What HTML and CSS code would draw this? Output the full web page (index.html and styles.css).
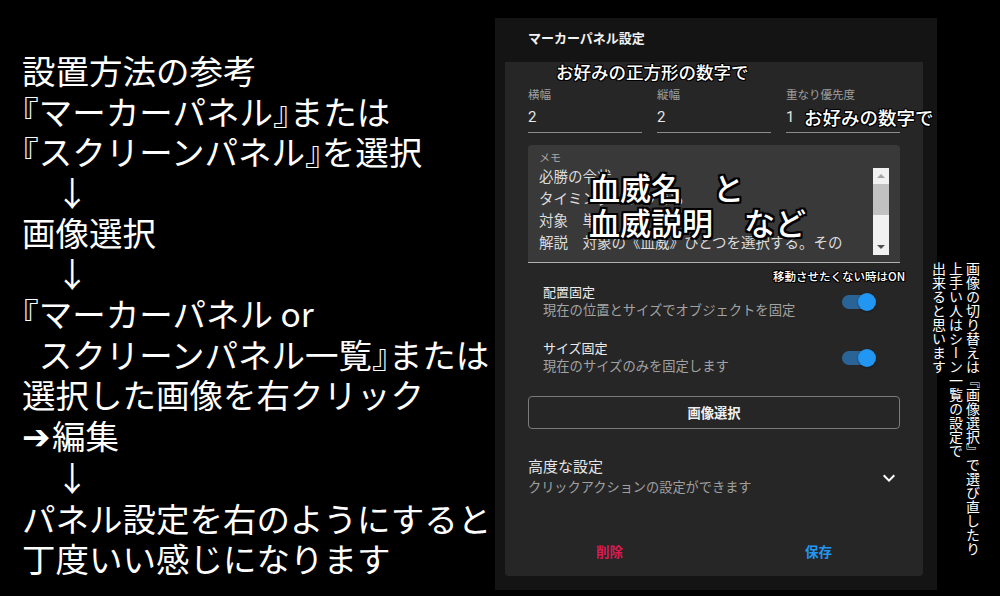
FILE: index.html
```html
<!DOCTYPE html>
<html lang="ja">
<head>
<meta charset="utf-8">
<title>マーカーパネル設定</title>
<link rel="stylesheet" href="styles.css">
</head>
<body>
<div class="page">
  <div class="guide">
    <div class="line">設置方法の参考</div>
    <div class="line"><span class="h">『</span>マーカーパネル<span class="h">』</span>または</div>
    <div class="line"><span class="h">『</span>スクリーンパネル<span class="h">』</span>を選択</div>
    <div class="line">　↓</div>
    <div class="line">画像選択</div>
    <div class="line">　↓</div>
    <div class="line"><span class="h">『</span>マーカーパネル or</div>
    <div class="line indent">スクリーンパネル一覧<span class="h">』</span>または</div>
    <div class="line">選択した画像を右クリック</div>
    <div class="line"><span class="arrow">➔</span>編集</div>
    <div class="line">　↓</div>
    <div class="line">パネル設定を右のようにすると</div>
    <div class="line">丁度いい感じになります</div>
  </div>

  <div class="panel">
    <div class="panel-title">マーカーパネル設定</div>
    <div class="card">
      <div class="fields">
        <div class="field"><div class="field-label">横幅</div><div class="field-value">2</div></div>
        <div class="field"><div class="field-label">縦幅</div><div class="field-value">2</div></div>
        <div class="field"><div class="field-label">重なり優先度</div><div class="field-value">1</div></div>
      </div>
      <div class="memo">
        <div class="memo-label">メモ</div>
        <div class="memo-body">
          <div class="memo-text">
            <div>必勝の令状</div>
            <div>タイミング　いつでも</div>
            <div>対象　単体</div>
            <div>解説　対象の《血威》ひとつを選択する。その</div>
          </div>
          <div class="scrollbar">
            <span class="sb-up"></span>
            <span class="sb-thumb"></span>
            <span class="sb-down"></span>
          </div>
        </div>
      </div>
      <div class="switches">
        <div class="switch-row">
          <div class="switch-text">
            <div class="switch-title">配置固定</div>
            <div class="switch-sub">現在の位置とサイズでオブジェクトを固定</div>
          </div>
          <span class="toggle"><span class="thumb"></span></span>
        </div>
        <div class="switch-row">
          <div class="switch-text">
            <div class="switch-title">サイズ固定</div>
            <div class="switch-sub">現在のサイズのみを固定します</div>
          </div>
          <span class="toggle"><span class="thumb"></span></span>
        </div>
      </div>
      <div class="select-btn">画像選択</div>
      <div class="advanced">
        <div class="adv-text">
          <div class="adv-title">高度な設定</div>
          <div class="adv-sub">クリックアクションの設定ができます</div>
        </div>
        <svg class="chev" width="24" height="24" viewBox="0 0 24 24"><path d="M16.59 8.59L12 13.17 7.41 8.59 6 10l6 6 6-6z" fill="#ffffff"/></svg>
      </div>
      <div class="footer">
        <span class="btn-del">削除</span>
        <span class="btn-save">保存</span>
      </div>
    </div>
  </div>

  <div class="note note-square">お好みの正方形の数字で</div>
  <div class="note note-number">お好みの数字で</div>
  <div class="note note-big">血威名　と<br>血威説明　など</div>
  <div class="note note-on">移動させたくない時はON</div>
  <div class="vnote">画像の切り替えは『画像選択』で選び直したり<br>上手い人はシーン一覧の設定で<br>出来ると思います</div>
</div>
</body>
</html>
```

FILE: styles.css
```css
html, body {
  margin: 0;
  padding: 0;
  background: #000;
}
.page {
  position: relative;
  width: 1000px;
  height: 596px;
  overflow: hidden;
  display: flex;
  align-items: flex-start;
  font-family: Roboto, "Noto Sans CJK JP", sans-serif;
}

/* left guide text */
.guide {
  width: 473px;
  padding: 50px 0 0 22px;
  font-family: "Noto Sans CJK JP", sans-serif;
  font-size: 33.5px;
  line-height: 40.5px;
  color: #fff;
  white-space: nowrap;
}
.guide .h { font-feature-settings: "halt" 1; }
.guide .indent { padding-left: 0.5em; }
.guide .arrow {
  display: inline-block;
  width: 30px;
  font-family: "DejaVu Sans", sans-serif;
  font-size: 34px;
  font-weight: 700;
}

/* dialog */
.panel {
  margin-top: 18px;
  width: 442px;
  height: 572px;
  background: #141414;
  display: flex;
  flex-direction: column;
}
.panel-title {
  height: 44px;
  box-sizing: border-box;
  padding: 12px 0 0 33px;
  font-size: 13px;
  line-height: 17px;
  font-weight: 700;
  color: #f2f2f2;
}
.card {
  margin: 0 14px 0 10px;
  height: 514px;
  box-sizing: border-box;
  padding: 26px 23px 0 23px;
  background: #262626;
  border-radius: 0 0 4px 4px;
  display: flex;
  flex-direction: column;
}
.fields {
  display: grid;
  grid-template-columns: repeat(3, 1fr);
  column-gap: 15px;
}
.field {
  border-bottom: 1px solid #8c8c8c;
  padding-bottom: 4px;
}
.field-label {
  font-size: 11.5px;
  line-height: 14px;
  color: #a0a0a0;
}
.field-value {
  margin-top: 4px;
  font-size: 15px;
  line-height: 22px;
  color: #e6e6e6;
}
.memo {
  margin-top: 12px;
  background: #393939;
  border-radius: 4px 4px 0 0;
  border-bottom: 1px solid #b0b0b0;
  padding: 7px 11px 7px 11px;
}
.memo-label {
  font-size: 11px;
  line-height: 14px;
  color: #a8a8a8;
}
.memo-body {
  margin-top: 1px;
  display: flex;
  align-items: flex-start;
}
.memo-text {
  flex: 1;
  font-size: 14.5px;
  line-height: 22px;
  color: #dcdcdc;
  white-space: nowrap;
  overflow: hidden;
}
.scrollbar {
  position: relative;
  width: 16px;
  height: 87px;
  margin-top: 1px;
  background: #f1f1f1;
  display: flex;
  flex-direction: column;
  align-items: center;
}
.sb-up {
  margin-top: 6px;
  width: 0;
  height: 0;
  border-left: 4px solid transparent;
  border-right: 4px solid transparent;
  border-bottom: 4px solid #a3a3a3;
}
.sb-thumb {
  margin-top: 6px;
  width: 16px;
  height: 31px;
  background: #c1c1c1;
}
.sb-down {
  margin-top: auto;
  margin-bottom: 6px;
  width: 0;
  height: 0;
  border-left: 4px solid transparent;
  border-right: 4px solid transparent;
  border-top: 4px solid #505050;
}
.switches {
  padding-top: 11px;
}
.switch-row {
  display: flex;
  align-items: center;
  padding: 10px 24px 10px 15px;
}
.switch-text { flex: 1; }
.switch-title {
  font-size: 13px;
  line-height: 18px;
  color: #ececec;
}
.switch-sub {
  font-size: 13.3px;
  line-height: 18px;
  color: #a3a3a3;
}
.toggle {
  position: relative;
  width: 34px;
  height: 14px;
}
.toggle::before {
  content: "";
  position: absolute;
  left: 0;
  top: 0;
  width: 28px;
  height: 14px;
  border-radius: 7px;
  background: #2a6496;
}
.thumb {
  position: absolute;
  left: 16px;
  top: -2px;
  width: 18px;
  height: 18px;
  border-radius: 50%;
  background: #2196f3;
  box-shadow: 0 1px 2px rgba(0,0,0,0.4);
}
.select-btn {
  margin-top: 10px;
  height: 33px;
  box-sizing: border-box;
  border: 1px solid #7a7a7a;
  border-radius: 4px;
  display: flex;
  align-items: center;
  justify-content: center;
  font-size: 13.3px;
  font-weight: 700;
  color: #f0f0f0;
}
.advanced {
  margin-top: 28px;
  display: flex;
  align-items: center;
}
.adv-text { flex: 1; }
.adv-title {
  font-size: 15px;
  line-height: 20px;
  color: #e6e6e6;
}
.adv-sub {
  margin-top: 1px;
  font-size: 13.2px;
  line-height: 20px;
  color: #a0a0a0;
}
.chev { margin-right: -1px; }
.footer {
  margin: auto -23px 0 -23px;
  height: 50px;
  display: grid;
  grid-template-columns: 1fr 1fr;
  align-items: center;
  justify-items: center;
  font-size: 13.5px;
  font-weight: 700;
}
.btn-del { color: #d81b50; }
.btn-save { color: #2196f3; }

/* overlaid annotations */
.note {
  position: absolute;
  font-family: "Noto Sans CJK JP", sans-serif;
  font-weight: 500;
  color: #fff;
  white-space: nowrap;
  text-shadow: -1px -1px 0 #000, 1px -1px 0 #000, -1px 1px 0 #000, 1px 1px 0 #000,
               0 -1px 0 #000, 0 1px 0 #000, -1px 0 0 #000, 1px 0 0 #000;
}
.note-square {
  left: 556px;
  top: 60px;
  font-size: 17.5px;
  line-height: 24px;
}
.note-number {
  left: 804px;
  top: 105px;
  font-size: 18.5px;
  line-height: 24px;
}
.note-big {
  left: 589px;
  top: 169px;
  font-size: 31px;
  line-height: 35px;
  text-shadow: -2px -2px 0 #000, 2px -2px 0 #000, -2px 2px 0 #000, 2px 2px 0 #000,
               0 -2px 0 #000, 0 2px 0 #000, -2px 0 0 #000, 2px 0 0 #000;
}
.note-on {
  left: 773px;
  top: 269px;
  font-size: 11.5px;
  line-height: 14px;
}
.vnote {
  position: absolute;
  left: 930px;
  top: 262px;
  writing-mode: vertical-rl;
  font-family: "Noto Sans CJK JP", sans-serif;
  font-size: 14px;
  line-height: 17px;
  color: #fff;
  white-space: nowrap;
}
```
